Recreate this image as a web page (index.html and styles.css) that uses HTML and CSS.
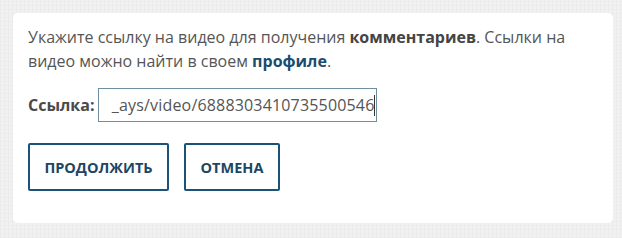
FILE: index.html
```html
<!DOCTYPE html>
<html lang="ru">
<head>
<meta charset="utf-8">
<link rel="stylesheet" href="styles.css">
</head>
<body>
<div class="card">
  <p class="intro">Укажите ссылку на видео для получения <b>комментариев</b>. Ссылки на видео можно найти в своем <a class="link" href="#">профиле</a>.</p>
  <div class="field">
    <label class="label" for="u">Ссылка:</label>
    <div class="input"><span class="value">_ays/video/6888303410735500546</span><span class="caret"></span></div>
  </div>
  <div class="actions">
    <button class="btn btn-wide">ПРОДОЛЖИТЬ</button>
    <button class="btn btn-narrow">ОТМЕНА</button>
  </div>
</div>
</body>
</html>
```
FILE: styles.css
```css
html, body { margin: 0; padding: 0; }
body {
  width: 622px; height: 238px;
  background-color: #f1f1f1;
  background-image:
    repeating-linear-gradient(90deg, rgba(0,0,0,0.018) 0 1px, transparent 1px 4px),
    repeating-linear-gradient(0deg, rgba(0,0,0,0.015) 0 1px, transparent 1px 4px);
  font-family: "Open Sans", "Liberation Sans", sans-serif;
  padding: 13px 9px 15px 13px;
  box-sizing: border-box;
}
.card {
  width: 600px; height: 210px;
  box-sizing: border-box;
  background: #fff;
  border-radius: 5px;
  padding: 12px 15px 0 15px;
}
.intro {
  margin: 0;
  font-size: 16px;
  line-height: 24px;
  color: #555;
}
.intro b { color: #444; font-weight: 700; }
.link { color: #1b4c6d; font-weight: 700; text-decoration: none; }
.field {
  display: flex; align-items: center;
  margin-top: 15px;
  gap: 4px;
}
.label { font-size: 16px; font-weight: 700; color: #4a4a4a; }
.input {
  width: 279px; height: 34px; box-sizing: border-box;
  border: 1px solid #6f8e9f;
  display: flex; align-items: center; justify-content: flex-end;
  padding-right: 1px;
  font-size: 16px; color: #555;
  overflow: hidden; white-space: nowrap;
}
.value { flex: none; letter-spacing: 0.17px; }
.caret { flex: none; display: inline-block; width: 1px; height: 21px; background: #333; }
.actions { display: flex; gap: 15px; margin-top: 21px; }
.btn {
  height: 48px; box-sizing: border-box;
  border: 2px solid #1b5277;
  border-radius: 2px;
  background: #fff;
  color: #1d4664;
  font-family: "Open Sans", "Liberation Sans", sans-serif;
  font-weight: 700; font-size: 14.5px;
  padding: 0;
}
.btn-wide { width: 141px; }
.btn-narrow { width: 96px; }
```
